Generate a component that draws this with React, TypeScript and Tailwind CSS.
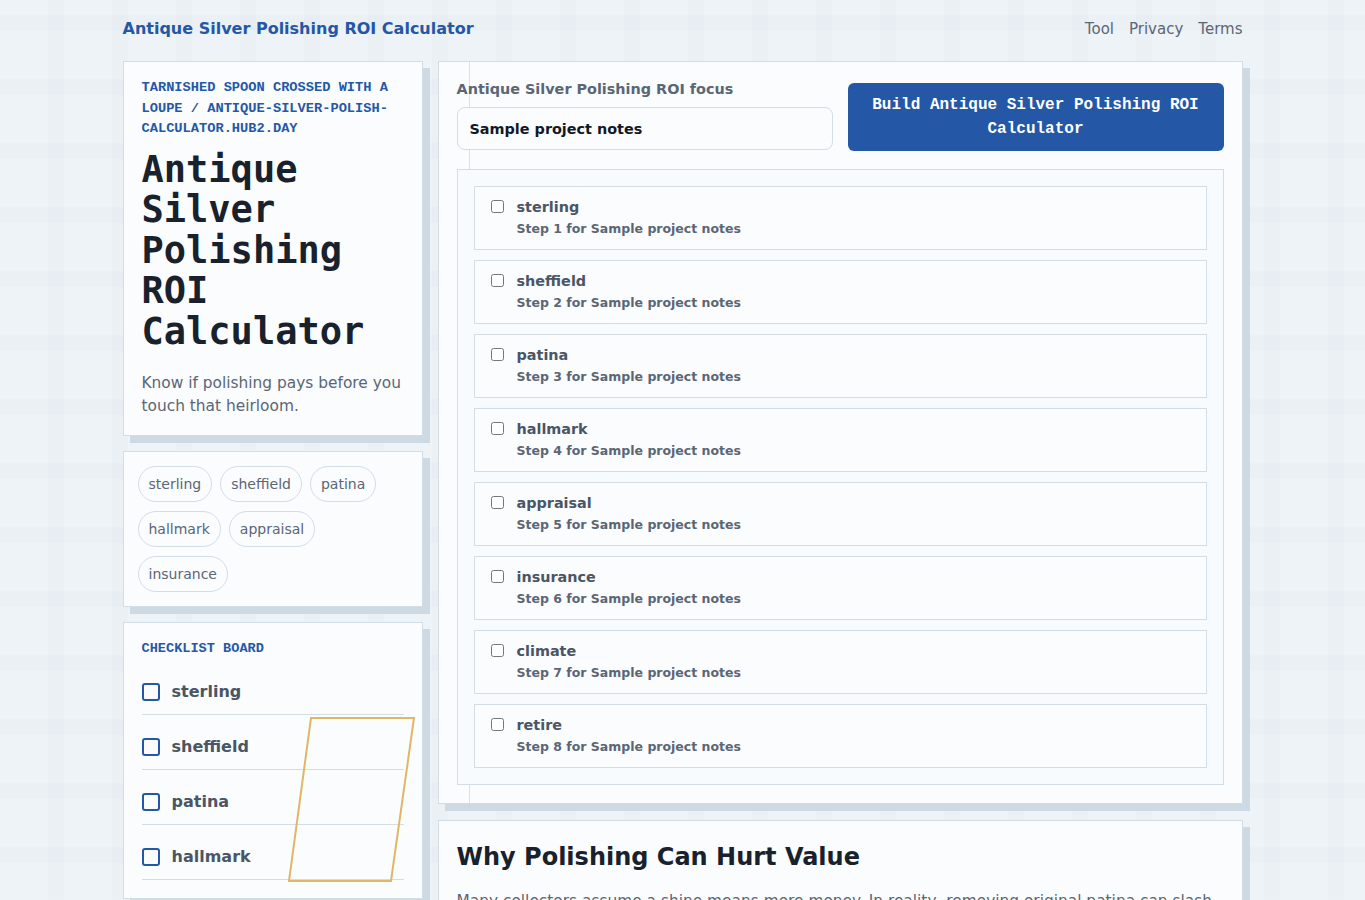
const steps = ["sterling", "sheffield", "patina", "hallmark", "appraisal", "insurance", "climate", "retire"];
const chips = steps.slice(0, 6);
const board = steps.slice(0, 4);

const card = "border border-[#d3dde5] bg-[#fafcfe] shadow-[7px_7px_0_#cddae3]";

function Header() {
  return (
    <header className="flex items-center justify-between pt-[18px] pb-[21px]">
      <a className="text-[16px] leading-[22px] font-bold text-[#2457a6]">Antique Silver Polishing ROI Calculator</a>
      <nav className="flex gap-[15px] text-[15px] leading-[22px] text-[#5b6675]">
        <a>Tool</a>
        <a>Privacy</a>
        <a>Terms</a>
      </nav>
    </header>
  );
}

function HeroCard() {
  return (
    <section className={`${card} px-[18px] pt-4 pb-[17px]`}>
      <p className="font-['Liberation_Mono',monospace] text-[13.7px] leading-[20.5px] font-bold text-[#2457a6] uppercase">
        Tarnished spoon crossed with a loupe / antique-silver-polish-calculator.hub2.day
      </p>
      <h1 className="mt-[10px] font-['DejaVu_Sans_Mono',monospace] text-[37px] leading-[40.5px] font-bold text-[#18212c]">
        Antique Silver Polishing ROI Calculator
      </h1>
      <p className="mt-5 text-[15.4px] leading-[23px] text-[#5b6675]">Know if polishing pays before you touch that heirloom.</p>
    </section>
  );
}

function ChipsCard() {
  return (
    <section className={`${card} flex flex-wrap gap-x-2 gap-y-[9px] p-[14px]`}>
      {chips.map((c) => (
        <span key={c} className="flex h-9 items-center rounded-full border border-[#d3dde5] px-[10px] text-[14px] text-[#5b6675]">
          {c}
        </span>
      ))}
    </section>
  );
}

function BoardCard() {
  return (
    <section className={`${card} relative px-[18px] pt-4 pb-[18px]`}>
      <p className="font-['Liberation_Mono',monospace] text-[13.6px] leading-5 font-bold text-[#2457a6] uppercase">Checklist board</p>
      <ul className="mt-[1px]">
        {board.map((b) => (
          <li key={b} className="flex items-center gap-3 border-b border-[#d3dde5] pt-5 pb-[10px]">
            <span className="h-[18px] w-[18px] shrink-0 rounded-[3px] border-2 border-[#2457a6]" />
            <span className="text-[16px] leading-6 font-bold text-[#4a5565]">{b}</span>
          </li>
        ))}
      </ul>
      {/* gold frame decoration */}
      <svg className="pointer-events-none absolute top-[94px] left-[164px]" width="128" height="166" viewBox="0 0 128 166" fill="none" aria-hidden="true">
        <polygon points="23,1 126,1 103,164 1,164" stroke="#dfb766" strokeWidth="2" />
      </svg>
    </section>
  );
}

function ToolCard() {
  return (
    <section className={`${card} relative p-[18px]`}>
      <div className="absolute top-0 bottom-0 left-[30px] w-px bg-[#d8e1e8]" />
      <div className="relative grid grid-cols-2 items-end gap-[15px]">
        <label className="flex flex-col">
          <span className="text-[14.4px] leading-[18px] font-bold text-[#5b6675]">Antique Silver Polishing ROI focus</span>
          <input
            defaultValue="Sample project notes"
            className="mt-[9px] h-[43px] rounded-lg border border-[#d3dde5] bg-[#fbfcfe] px-3 text-[14.4px] font-bold text-[#111827] outline-none"
          />
        </label>
        <button className="mb-[-1px] h-[68px] rounded-md bg-[#2457a6] px-4 font-['Liberation_Mono',monospace] text-[16px] leading-6 font-bold text-white">
          Build Antique Silver Polishing ROI Calculator
        </button>
      </div>
      <div className="relative mt-[19px] flex flex-col gap-[10px] border border-[#d3dde5] bg-[#f8fbfd] p-4">
        {steps.map((s, i) => (
          <label key={s} className="flex items-start gap-[13px] border border-[#d3dde5] bg-[#fbfcfe] px-4 pt-[10px] pb-[11px]">
            <input type="checkbox" className="mt-[3px] h-[13px] w-[13px] shrink-0" />
            <span className="flex flex-col gap-[3px]">
              <span className="text-[14.4px] leading-5 font-bold text-[#4a5565]">{s}</span>
              <span className="text-[12.5px] leading-[18px] font-bold text-[#5b6675]">Step {i + 1} for Sample project notes</span>
            </span>
          </label>
        ))}
      </div>
    </section>
  );
}

function ArticleCard() {
  return (
    <section className={`${card} px-[18px] pt-5 pb-[18px]`}>
      <h2 className="text-[24px] leading-8 font-bold text-[#18212c]">Why Polishing Can Hurt Value</h2>
      <p className="mt-[16px] text-[15.4px] leading-6 text-[#5b6675]">
        Many collectors assume a shine means more money. In reality, removing original patina can slash resale value,
        erase crisp hallmarks and thin the plating on Sheffield pieces. Before you reach for a cloth, weigh the cost of
        professional work against what an appraiser would actually pay.
      </p>
    </section>
  );
}

export default function App() {
  return (
    <div className="min-h-screen bg-[#eef3f7] bg-[linear-gradient(90deg,rgba(100,116,139,0.018)_0_16px,transparent_16px),linear-gradient(rgba(100,116,139,0.018)_0_16px,transparent_16px)] bg-[size:64px_64px] bg-[position:48px_15px] font-['DejaVu_Sans',sans-serif]">
      <div className="mx-auto max-w-[1120px] pb-10">
        <Header />
        <main className="grid grid-cols-[300px_1fr] items-start gap-[15px]">
          <div className="flex flex-col gap-[15px]">
            <HeroCard />
            <ChipsCard />
            <BoardCard />
          </div>
          <div className="flex flex-col gap-4">
            <ToolCard />
            <ArticleCard />
          </div>
        </main>
      </div>
    </div>
  );
}
